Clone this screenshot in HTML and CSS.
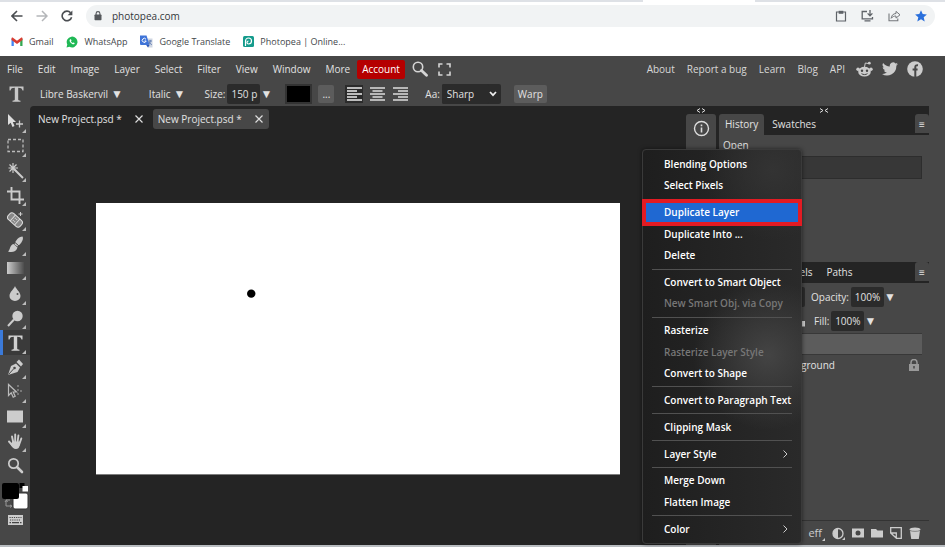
FILE: index.html
```html
<!DOCTYPE html>
<html lang="en">
<head>
<meta charset="utf-8">
<title>Photopea | Online Photo Editor</title>
<link rel="stylesheet" href="styles.css">
</head>
<body>
<header class="browser">
  <div class="tabstrip"><span class="strip-left"></span><span class="strip-active"></span><span class="strip-right"></span></div>
  <div class="navrow">
    <button class="nav" aria-label="Back"><svg width="12" height="12" viewBox="0 0 12 12"><path d="M11.5 6H1M6 1L1 6l5 5" fill="none" stroke="#4b4e52" stroke-width="1.6"/></svg></button>
    <button class="nav" aria-label="Forward"><svg width="12" height="12" viewBox="0 0 12 12"><path d="M.5 6H11M6 1l5 5-5 5" fill="none" stroke="#b4b6b9" stroke-width="1.5"/></svg></button>
    <button class="nav" aria-label="Reload"><svg width="12" height="12" viewBox="0 0 12 12"><path d="M10.6 7.2A4.8 4.8 0 1 1 9.6 2.8" fill="none" stroke="#4b4e52" stroke-width="1.6"/><path d="M11.4.4v4.8H6.6z" fill="#4b4e52"/></svg></button>
    <div class="omnibox">
      <svg width="8" height="10" viewBox="0 0 8 10"><rect x="0.5" y="3.6" width="7" height="5.6" rx=".7" fill="#55585c"/><path d="M2.1 4V2.5a1.9 1.9 0 0 1 3.8 0V4" fill="none" stroke="#55585c" stroke-width="1.1"/></svg>
      <input class="url" aria-label="Address" value="photopea.com">
      <button class="nav" aria-label="Clipboard"><svg width="12" height="12" viewBox="0 0 12 12"><path d="M1.500 2h9v9h-9z" fill="none" stroke="#5f6368" stroke-width="1.2"/><path d="M3.700 .8h4.600v3H3.700z" fill="#5f6368"/></svg></button>
      <button class="nav" aria-label="Install"><svg width="13" height="12" viewBox="0 0 13 12"><path d="M6 1.500H1.200v7.300h10.300V7M3.500 10.800h6" fill="none" stroke="#5f6368" stroke-width="1.3"/><path d="M9 0v5.500M6.600 3.400L9 5.800l2.400-2.400" fill="none" stroke="#5f6368" stroke-width="1.3"/></svg></button>
      <button class="nav" aria-label="Share"><svg width="13" height="12" viewBox="0 0 13 12"><path d="M1 3.500v7.300h8.800V8.500" fill="none" stroke="#74777b" stroke-width="1.1"/><path d="M3.200 8.300c.3-3 2-4.600 4.800-4.800V1.400l4 3.400-4 3.300V6C6 6 4.400 6.700 3.200 8.300z" fill="none" stroke="#74777b" stroke-width="1"/></svg></button>
      <button class="nav" aria-label="Bookmark"><svg width="12" height="12" viewBox="0 0 12 12"><path d="M6 .2l1.700 3.900 4.200.4-3.200 2.800 1 4.200L6 9.300l-3.700 2.200 1-4.200L.1 4.500l4.200-.4z" fill="#2a6fdc"/></svg></button>
    </div>
  </div>
  <nav class="bookmarks">
    <a href="#"><svg width="12" height="10" viewBox="0 0 12 10"><path d="M.5 1.500V9h2.300V4z" fill="#4285f4"/><path d="M11.500 1.500V9H9.200V4z" fill="#34a853"/><path d="M.5 1.500C.5.500 1.500.300 2.300 1L6 3.800 9.700 1c.8-.7 1.800-.5 1.800.500V3L6 7 .5 3z" fill="#d93c31"/></svg>Gmail</a>
    <a href="#"><svg width="12" height="12" viewBox="0 0 12 12"><path d="M.5 11.500l.8-3A5.400 5.400 0 1 1 3.400 10.700z" fill="#1fb855"/><path d="M4.200 3.200C3 4 3.700 5.600 4.700 6.800S7.300 8.800 8.400 8l.2-.9-1.300-.6-.6.6C5.900 6.800 5.200 6.100 4.900 5.300l.6-.6L5 3.200z" fill="#fff"/></svg>WhatsApp</a>
    <a href="#"><svg width="13" height="13" viewBox="0 0 13 13"><path d="M5 3.500h7.500v9H8z" fill="#cfd6e2"/><path d="M0 .5h6.500L9.600 10H1a1 1 0 0 1-1-1z" fill="#3f74d8"/><path d="M8.500 6h3.500M10.200 5v1c0 2-1 3-2 3.800M9 6.500c.5 1.500 1.500 2.500 2.800 3.200" stroke="#6580b5" fill="none"/><path d="M6 4.300A2 2 0 1 0 6.200 6H4.500" stroke="#fff" fill="none"/><path d="M6.200 10h3.400L8 12.500z" fill="#2b56b5"/></svg>Google Translate</a>
    <a href="#"><svg width="11" height="11" viewBox="0 0 11 11"><rect width="11" height="11" rx="1.500" fill="#159b8c"/><path d="M2.500 10V5a3 3 0 1 1 3 3c-2 0-2-3 0-3" fill="none" stroke="#fff" stroke-width="1.200"/></svg>Photopea | Online...</a>
  </nav>
</header>

<main class="app">
  <div class="menubar">
    <nav class="menus">
      <button>File</button><button>Edit</button><button>Image</button><button>Layer</button><button>Select</button><button>Filter</button><button>View</button><button>Window</button><button>More</button>
    </nav>
    <button class="account">Account</button>
    <button class="menuicon" aria-label="Search"><svg width="16" height="16" viewBox="0 0 16 16"><circle cx="6" cy="6" r="4.700" fill="none" stroke="#d5d5d5" stroke-width="1.600"/><path d="M9.500 9.500l5 4.800" stroke="#d5d5d5" stroke-width="2.800" stroke-linecap="round"/></svg></button>
    <button class="menuicon" aria-label="Full screen"><svg width="13" height="13" viewBox="0 0 13 13"><path d="M1 4.500V1h3.500M8.500 1H12v3.500M12 8.500V12H8.500M4.500 12H1V8.500" fill="none" stroke="#d5d5d5" stroke-width="1.600"/></svg></button>
    <nav class="links">
      <a href="#">About</a><a href="#">Report a bug</a><a href="#">Learn</a><a href="#">Blog</a><a href="#">API</a>
    </nav>
    <nav class="social">
      <a href="#" aria-label="Reddit"><svg width="17" height="17" viewBox="0 0 17 17"><g fill="#ccc"><ellipse cx="8.500" cy="10.700" rx="6.300" ry="4.900"/><circle cx="2" cy="8.300" r="1.700"/><circle cx="15" cy="8.300" r="1.700"/><circle cx="13.300" cy="2.200" r="1.400"/></g><path d="M8.500 6l.8-4 3.600.6" fill="none" stroke="#ccc"/><circle cx="6" cy="9.700" r="1.200" fill="#474747"/><circle cx="11" cy="9.700" r="1.200" fill="#474747"/><path d="M5.500 12.600c1.700 1.300 4.300 1.300 6 0" stroke="#474747" fill="none"/></svg></a>
      <a href="#" aria-label="Twitter"><svg width="16" height="14" viewBox="0 0 24 20"><path d="M24 2.400a10 10 0 0 1-2.800.8A5 5 0 0 0 23.300.500a10 10 0 0 1-3.100 1.200A4.900 4.900 0 0 0 11.800 6.200 14 14 0 0 1 1.700 1a4.900 4.900 0 0 0 1.500 6.600A5 5 0 0 1 1 7a4.900 4.900 0 0 0 3.900 4.900 5 5 0 0 1-2.200.1 4.900 4.900 0 0 0 4.600 3.400A10 10 0 0 1 0 17.500 14 14 0 0 0 21.500 5z" fill="#ccc"/></svg></a>
      <a href="#" aria-label="Facebook"><svg width="16" height="16" viewBox="0 0 16 16"><circle cx="8" cy="8" r="7.800" fill="#ccc"/><path d="M8.300 16V6.200C8.300 4.600 9.200 4 11 4.200M5.600 8.500h5" fill="none" stroke="#474747" stroke-width="2"/></svg></a>
    </nav>
  </div>

  <div class="optbar">
    <div class="big-t"><svg width="15" height="16" viewBox="0 0 15 16"><path d="M.5.500h14v4h-1C13 2.500 12 1.800 9.200 1.800v11.400c0 1 .6 1.400 2.300 1.500v1h-8v-1c1.700-.1 2.300-.5 2.300-1.500V1.800C3 1.800 2 2.500 1.500 4.500h-1z" fill="#c8c8c8"/></svg></div>
    <button class="plain font">Libre Baskervil <span class="caret">▼</span></button>
    <button class="plain style">Italic <span class="caret">▼</span></button>
    <label for="size">Size:</label><input id="size" class="dark size" value="150 p"><button class="plain caret" aria-label="Size presets">▼</button>
    <button class="color" aria-label="Text color"></button>
    <button class="grey dots">...</button>
    <div class="aligns">
      <button class="on" aria-label="Align left"><svg width="15" height="14" viewBox="0 0 15 14"><path d="M0 1h15M0 4h10M0 7h15M0 10h10M0 13h15" stroke="#eee" stroke-width="1.500"/></svg></button>
      <button aria-label="Align center"><svg width="15" height="14" viewBox="0 0 15 14"><path d="M0 1h15M2.500 4h10M0 7h15M2.500 10h10M0 13h15" stroke="#ddd" stroke-width="1.500"/></svg></button>
      <button aria-label="Align right"><svg width="15" height="14" viewBox="0 0 15 14"><path d="M0 1h15M5 4h10M0 7h15M5 10h10M0 13h15" stroke="#ddd" stroke-width="1.500"/></svg></button>
    </div>
    <label for="aa">Aa:</label>
    <span class="selwrap"><select id="aa" class="dark"><option>Sharp</option></select><svg width="8" height="6" viewBox="0 0 8 6"><path d="M1 1l3 3.200L7 1" fill="none" stroke="#eee" stroke-width="1.700"/></svg></span>
    <button class="grey warp">Warp</button>
  </div>

  <div class="work">
    <aside class="toolbar">
      <div class="tools">
        <button class="more" aria-label="Move"><svg width="17" height="17" viewBox="0 0 17 17"><path d="M1 1v11l2.700-2.300L5.500 14l2-1-1.700-4H9z" fill="#ddd"/><path d="M12.500 7.500v7M9 11h7" stroke="#ccc" stroke-width="1.300"/></svg></button>
        <button class="more" aria-label="Marquee"><svg width="17" height="17" viewBox="0 0 17 17"><rect x="1" y="2.500" width="15" height="12" fill="none" stroke="#bbb" stroke-width="1.300" stroke-dasharray="3 2"/></svg></button>
        <button class="more" aria-label="Wand"><svg width="17" height="17" viewBox="0 0 17 17"><path d="M7 7l9 9" stroke="#ccc" stroke-width="2"/><path d="M6 1v10M1.500 6h9.500M2.500 2.500l7 7M9.500 2.500l-7 7" stroke="#ccc" stroke-width="1.200"/></svg></button>
        <button class="more" aria-label="Crop"><svg width="17" height="17" viewBox="0 0 17 17"><path d="M4.500 0v12.500H17M0 4.500h12.500V17" fill="none" stroke="#ccc" stroke-width="1.900"/></svg></button>
        <button class="more" aria-label="Healing"><svg width="17" height="17" viewBox="0 0 17 17"><g transform="rotate(42 8 9)"><rect x="0" y="5" width="16" height="8" rx="3" fill="#888" stroke="#ddd"/><path d="M5 5v8M11 5v8" stroke="#ddd"/><path d="M6.500 7.500h3M6.500 10.500h3" stroke="#ddd" stroke-dasharray="1 1"/></g><path d="M13.500 1v4M11.500 3h4" stroke="#ccc"/></svg></button>
        <button class="more" aria-label="Brush"><svg width="17" height="17" viewBox="0 0 17 17"><path d="M7.500 8.500c1-4 4-8 8-8 1.500 2.500-1 7-5 10z" fill="#ccc"/><path d="M6.500 8l4 3.500C9.500 15.500 5 17 1 15.500 3.500 14 2.500 9 6.500 8z" fill="#ccc"/><path d="M8 6.500l4 3.500" stroke="#474747"/></svg></button>
        <button class="more" aria-label="Gradient"><svg width="17" height="13" viewBox="0 0 17 13"><defs><linearGradient id="g"><stop stop-color="#ccc"/><stop offset="1" stop-color="#4c4c4c"/></linearGradient></defs><rect width="17" height="12" fill="url(#g)"/></svg></button>
        <button class="more" aria-label="Blur"><svg width="17" height="17" viewBox="0 0 17 17"><path d="M8 1c1 3 5.500 6 5.500 10a5.500 5 0 0 1-11 0C2.500 7 7 4 8 1z" fill="#ccc"/><circle cx="10.500" cy="9" r="1" fill="#555"/></svg></button>
        <button class="more" aria-label="Dodge"><svg width="17" height="17" viewBox="0 0 17 17"><circle cx="10.500" cy="6" r="5.200" fill="#ccc"/><path d="M7 9.500L1 16" stroke="#ccc" stroke-width="2"/></svg></button>
        <button class="more active" aria-label="Type"><svg width="15" height="16" viewBox="0 0 15 16"><path d="M.5.500h14v4h-1C13 2.500 12 1.800 9.200 1.800v11.400c0 1 .6 1.400 2.300 1.500v1h-8v-1c1.700-.1 2.300-.5 2.300-1.500V1.800C3 1.800 2 2.500 1.500 4.500h-1z" fill="#d0d0d0"/></svg></button>
        <button class="more" aria-label="Pen"><svg width="17" height="17" viewBox="0 0 17 17"><path d="M1 16L4 7l5-2.500 4 4L10.500 13z" fill="#ccc"/><path d="M9.500 3l2.500-2.500L16 5l-2 2.500z" fill="#ccc"/><path d="M1.500 15.500l5-5.500" stroke="#474747"/><circle cx="7.500" cy="9" r="1.300" fill="#474747"/></svg></button>
        <button class="more" aria-label="Path select"><svg width="17" height="17" viewBox="0 0 17 17"><path d="M1.500 1.500v11l2.700-2.700 2 4.500 2-1L6.200 9H9.500z" fill="none" stroke="#bbb" stroke-width="1.200"/><path d="M11 2v12M13 8h3" stroke="#aaa" stroke-dasharray="2 2"/></svg></button>
        <button class="more" aria-label="Rectangle"><svg width="17" height="13" viewBox="0 0 17 13"><rect y=".5" width="16" height="12" fill="#ccc"/></svg></button>
        <button class="more" aria-label="Hand"><svg width="17" height="17" viewBox="0 0 17 17"><path d="M2 8.500l3.500 4M5 3.500l1.500 7M8.200 1.500v9M11.400 2.500l-1 8M14.300 5.500L12 12" stroke="#ccc" stroke-width="1.900" stroke-linecap="round"/><path d="M5.500 8.500h7.500l-.5 4.500c-.4 2-1.600 3-3.500 3-2.500 0-4-2-5.500-4.500z" fill="#ccc"/></svg></button>
        <button aria-label="Zoom"><svg width="17" height="17" viewBox="0 0 17 17"><circle cx="6.500" cy="6.500" r="4.700" fill="none" stroke="#ccc" stroke-width="1.700"/><path d="M10 10l5 5" stroke="#ccc" stroke-width="2.600" stroke-linecap="round"/></svg></button>
      </div>
      <button class="swatches" aria-label="Colors"><svg width="28" height="28" viewBox="0 0 28 28"><rect x="18.500" y="1" width="5" height="5" fill="#000"/><rect x="21.500" y="4" width="5.500" height="5.500" fill="#fff"/><path d="M5 19v5h5M4 20l1.300-2 1.200 2M9 23l2 1-2 1.500M5 18h4" fill="none" stroke="#999"/><rect x="12" y="11" width="15" height="16" rx="2" fill="#fff" stroke="#333"/><rect x="1" y="1" width="17" height="16" rx="2" fill="#000"/></svg></button>
      <button class="keyboard" aria-label="Keyboard"><svg width="15" height="10" viewBox="0 0 15 10"><rect width="15" height="10" fill="#ccc"/><path d="M1.500 2.500h12M2 5h11" stroke="#444" stroke-width="1.200" stroke-dasharray="1.200 1"/><path d="M1.500 7.700h1.500M4 7.700h7M12 7.700h1.500" stroke="#444" stroke-width="1.200"/></svg></button>
    </aside>

    <section class="dock">
      <div class="doc">
        <div class="doctabs">
          <div class="doctab"><span>New Project.psd *</span><button aria-label="Close"><svg width="8" height="8" viewBox="0 0 8 8"><path d="M.5.500l7 7M7.500.500l-7 7" stroke="#ddd" stroke-width="1.200"/></svg></button></div>
          <div class="doctab current"><span>New Project.psd *</span><button aria-label="Close"><svg width="8" height="8" viewBox="0 0 8 8"><path d="M.5.500l7 7M7.500.500l-7 7" stroke="#ddd" stroke-width="1.200"/></svg></button></div>
        </div>
        <div class="stage"><svg class="canvas" viewBox="0 0 524 271"><rect width="524" height="271" fill="#fff"/><circle cx="155" cy="90.500" r="4.200" fill="#000"/></svg></div>
      </div>

      <div class="rail">
        <button class="fold" aria-label="Expand"><svg width="10" height="5" viewBox="0 0 10 5"><path d="M4 .5L1 2.500l3 2M6 .5l3 2-3 2" fill="none" stroke="#ddd"/></svg></button>
        <button class="info" aria-label="Properties"><svg width="17" height="17" viewBox="0 0 17 17"><circle cx="8.500" cy="8.500" r="7" fill="none" stroke="#ddd" stroke-width="1.400"/><path d="M8.500 7.500v5M8.500 4.500v1.700" stroke="#ddd" stroke-width="1.600"/></svg></button>
      </div>

      <div class="panels">
        <button class="fold" aria-label="Collapse"><svg width="10" height="5" viewBox="0 0 10 5"><path d="M1 .5l3 2-3 2M9 .5l-3 2 3 2" fill="none" stroke="#ddd"/></svg></button>
        <div class="ptabs"><button class="current">History</button><button>Swatches</button><button class="pmenu" aria-label="Panel menu">≡</button></div>
        <div class="history"><div class="hrow">Open</div><div class="hrow sel"></div></div>
        <div class="ptabs"><button class="current">Layers</button><button>Channels</button><button>Paths</button><button class="pmenu" aria-label="Panel menu">≡</button></div>
        <div class="layers">
          <div class="lopt"><select class="dark blend" aria-label="Blend mode"><option>Normal</option></select><label for="op">Opacity:</label><input id="op" class="dark pct" value="100%"><button class="plain caret" aria-label="Opacity slider">▼</button></div>
          <div class="lopt"><span class="locks"><svg width="8" height="12" viewBox="0 0 8 12"><path d="M0 6h7v5.500H0zM2 1h2v5H2z" fill="#ccc"/></svg></span><label for="fill">Fill:</label><input id="fill" class="dark pct" value="100%"><button class="plain caret" aria-label="Fill slider">▼</button></div>
          <div class="layer sel"></div>
          <div class="layer"><span>Background</span><svg width="10" height="12" viewBox="0 0 10 12"><path d="M0 5h10v7H0z" fill="#999"/><path d="M2 5.500V3.500a3 3 0 0 1 6 0v2" fill="none" stroke="#999" stroke-width="1.500"/><path d="M5 7v2.500" stroke="#474747" stroke-width="1.500"/></svg></div>
        </div>
        <div class="pfoot">
          <button aria-label="Link layers"><svg width="13" height="13" viewBox="0 0 13 13"><path d="M9 3c3 0 3 7 0 7M4 3c-3 0-3 7 0 7M4 6.500h5" fill="none" stroke="#aaa" stroke-width="1.300"/></svg></button>
          <button class="eff">eff<svg width="3" height="3" viewBox="0 0 3 3"><path d="M3 0v3H0z" fill="#ccc"/></svg></button>
          <button aria-label="Adjustment"><svg width="13" height="13" viewBox="0 0 13 13"><circle cx="6" cy="6.500" r="5" fill="none" stroke="#ccc" stroke-width="1.300"/><path d="M6 1.500a5 5 0 0 0 0 10zM13 10v3h-3z" fill="#ccc"/></svg></button>
          <button aria-label="Mask"><svg width="12" height="12" viewBox="0 0 12 12"><rect y="1.500" width="12" height="9" fill="#ccc"/><circle cx="6" cy="6" r="2.500" fill="#474747"/></svg></button>
          <button aria-label="Group"><svg width="12" height="12" viewBox="0 0 12 12"><path d="M0 2h5l1.500 1.500H12v7H0z" fill="#ccc"/></svg></button>
          <button aria-label="New layer"><svg width="12" height="12" viewBox="0 0 12 12"><path d="M.700 6V.700h10.600v10.600H6.500L.700 6h5.600v5" fill="none" stroke="#ccc" stroke-width="1.300"/></svg></button>
          <button aria-label="Delete"><svg width="12" height="12" viewBox="0 0 12 12"><path d="M1 3.500h10L9.800 12H2.200z" fill="#ccc"/><ellipse cx="6" cy="2.500" rx="5.500" ry="2" fill="#ccc"/><path d="M1 3.600c2.500 1 7.500 1 10 0" fill="none" stroke="#666" stroke-width=".7"/></svg></button>
        </div>
      </div>
    </section>
  </div>
</main>

<div class="context" role="menu">
  <button role="menuitem">Blending Options</button>
  <button role="menuitem">Select Pixels</button>
  <hr>
  <button role="menuitem" class="hot">Duplicate Layer</button>
  <button role="menuitem">Duplicate Into ...</button>
  <button role="menuitem">Delete</button>
  <hr>
  <button role="menuitem">Convert to Smart Object</button>
  <button role="menuitem" disabled>New Smart Obj. via Copy</button>
  <hr>
  <button role="menuitem">Rasterize</button>
  <button role="menuitem" disabled>Rasterize Layer Style</button>
  <button role="menuitem">Convert to Shape</button>
  <hr>
  <button role="menuitem">Convert to Paragraph Text</button>
  <hr>
  <button role="menuitem">Clipping Mask</button>
  <hr>
  <button role="menuitem">Layer Style<svg width="5" height="8" viewBox="0 0 5 8"><path d="M.5.500L4 4 .5 7.500" fill="none" stroke="#ccc"/></svg></button>
  <hr>
  <button role="menuitem">Merge Down</button>
  <button role="menuitem">Flatten Image</button>
  <hr>
  <button role="menuitem">Color<svg width="5" height="8" viewBox="0 0 5 8"><path d="M.5.500L4 4 .5 7.500" fill="none" stroke="#ccc"/></svg></button>
</div>
</body>
</html>
```
FILE: styles.css
```css
* { box-sizing: border-box; }
body {
  margin: 0;
  height: 100vh;
  display: flex;
  flex-direction: column;
  overflow: hidden;
  background: #fff;
  font: 10px/16px "Open Sans", sans-serif;
  color: #e2e2e2;
}
button, input, select { font: inherit; color: inherit; border: 0; margin: 0; padding: 0; background: none; }
button { display: flex; align-items: center; justify-content: center; white-space: nowrap; }
a { color: inherit; text-decoration: none; }
svg { display: block; flex: none; }
label { white-space: nowrap; }

/* Browser chrome */
.browser { flex: none; font-size: 9px; color: #44474b; }
.tabstrip { display: flex; height: 2px; }
.strip-left { flex: 643; background: #dee1e6; }
.strip-active { flex: 112; }
.strip-right { flex: 190; background: #dee1e6; }
.navrow { display: flex; align-items: center; height: 28px; padding: 0 10px 0 11px; gap: 13px; }
.omnibox { flex: 1; display: flex; align-items: center; height: 22px; padding: 0 8px; gap: 14px; border-radius: 11px; background: #f1f3f4; }
.url { flex: 1; min-width: 0; margin-left: -4px; font-size: 10px; color: #33363a; }
.bookmarks { display: flex; align-items: center; height: 26px; padding: 0 11px 3px; gap: 13px; }
.bookmarks a { display: flex; align-items: center; gap: 6px; }

/* Menu bar */
.app { flex: 1; min-height: 0; display: flex; flex-direction: column; background: #474747; border-bottom: 2px solid #b9bdc1; }
.menubar { display: flex; align-items: center; flex: none; height: 26px; padding: 0 22px 0 7px; }
.menus { display: flex; gap: 15px; }
.account { height: 19px; margin: 0 7px; padding: 0 5px; border-radius: 2px; background: #b50000; color: #fff; }
.menuicon { margin-right: 10px; }
.links, .social { display: flex; align-items: center; color: #d8d8d8; }
.links { gap: 12px; margin-left: auto; }
.social { gap: 9px; margin-left: 11px; }

/* Tool options */
.optbar { display: flex; align-items: center; flex: none; height: 24px; padding-left: 9px; }
.big-t { width: 31px; }
.caret { font-size: 12px; }
.font, .style { gap: 3px; }
.font { margin-right: 26px; }
.style { margin-right: 19px; }
.dark { height: 20px; background: #2b2b2b; border-radius: 2px; color: #e2e2e2; }
.size { width: 33px; margin-left: 2px; padding-left: 4px; }
.color { width: 27px; height: 20px; margin: 0 6px 0 13px; border: 2px solid #333; background: #000; }
.grey { height: 18px; background: #5c5c5c; border-radius: 2px; }
.dots { width: 16px; margin-right: 11px; }
.aligns { display: flex; gap: 5px; margin-right: 16px; }
.aligns button { width: 18px; height: 18px; }
.aligns .on { background: #2b2b2b; }
.selwrap { display: flex; align-items: center; margin-left: 2px; border-radius: 2px; background: #2b2b2b; padding-right: 4px; }
.selwrap select { width: 47px; padding-left: 5px; appearance: none; }
.warp { margin-left: 13px; padding: 0 4px; }

/* Left toolbar */
.work { flex: 1; min-height: 0; display: flex; }
.toolbar { width: 30px; flex: none; display: flex; flex-direction: column; padding-top: 3px; }
.tools { flex: 1; display: grid; grid-auto-rows: 1fr; }
.tools button { position: relative; min-height: 0; }
.tools .more::after { content: ""; position: absolute; right: 4px; bottom: 1px; border: 2px solid transparent; border-right-color: #bbb; border-bottom-color: #bbb; }
.tools .active { background: #3a3a3a; border-left: 3px solid #3b7ad9; padding-right: 3px; }
.swatches { height: 28px; margin-top: 4px; }
.keyboard { height: 35px; padding-bottom: 15px; }

/* Document area */
.dock { flex: 1; min-width: 0; display: flex; margin-right: 16px; background: #242424; border-top-left-radius: 4px; }
.doc { flex: 1; min-width: 0; display: flex; flex-direction: column; }
.doctabs { display: flex; gap: 4px; padding: 3px 1px 0; }
.doctab { display: flex; align-items: center; height: 20px; padding: 0 6px 0 7px; gap: 13px; border-radius: 3px; }
.doctab.current { padding-left: 5px; background: #474747; }
.stage { flex: 1; min-height: 0; display: flex; align-items: center; justify-content: center; padding-top: 4px; }
.canvas { width: 80%; }

/* Panels */
.rail { width: 30px; display: flex; flex-direction: column; }
.fold { height: 8px; flex: none; width: 100%; }
.info { flex: 1; align-items: flex-start; padding-top: 6px; background: #474747; border-radius: 3px 3px 0 0; }
.panels { width: 210px; margin-left: 3px; display: flex; flex-direction: column; background: #474747; }
.panels .fold { background: #242424; }
.ptabs { display: flex; flex: none; height: 21px; background: #242424; gap: 2px; }
.ptabs button { padding: 0 6px 1px; border-radius: 3px 3px 0 0; }
.ptabs .current { background: #474747; }
.ptabs .pmenu { width: 14px; height: 19px; padding: 0; margin-left: auto; background: #474747; }
.history { flex: none; height: 127px; padding: 0 7px 0 2px; }
.hrow { height: 21px; padding: 2px; }
.hrow.sel { height: 23px; background: #373737; border: 1px solid #2d2d2d; }
.layers { flex: 1; padding-top: 2px; }
.lopt { display: flex; align-items: center; height: 24px; }
.blend { width: 84px; margin: 0 6px 0 2px; padding-left: 4px; appearance: none; }
.pct { width: 33px; margin-left: 2px; text-align: center; }
.locks { width: 87px; margin-right: 8px; display: flex; justify-content: flex-end; }
.layer { display: flex; align-items: center; justify-content: space-between; height: 21px; margin-right: 7px; padding: 0 3px 0 60px; border-top: 1px solid #383838; }
.layer.sel { background: #5c5c5c; }
.pfoot { display: flex; flex: none; align-items: center; justify-content: flex-end; gap: 7px; height: 25px; padding-right: 8px; border-top: 1px solid #333; }
.eff { align-items: flex-end; font-size: 11px; color: #ccc; }

/* Layer context menu */
.context {
  position: absolute;
  top: 149px;
  right: 143px;
  bottom: 3px;
  width: 160px;
  display: flex;
  flex-direction: column;
  justify-content: space-between;
  padding: 4px 0 3px;
  border: 1px solid #3a3a3a;
  border-radius: 4px;
  color: #fff;
  font-weight: 600;
  background:
    radial-gradient(circle at 125px 205px, #444 0, transparent 75px),
    radial-gradient(circle at 130px 20px, #333 0, transparent 70px),
    linear-gradient(90deg, #1e1e1e, #2a2a2a);
  box-shadow: 0 0 4px #0008;
}
.context button { height: 21px; margin: 0 2px; justify-content: space-between; padding: 0 11px 1px 19px; }
.context button:disabled { color: #777; }
.context hr { width: 140px; height: 1px; margin: 2px auto; border: 0; background: #515151; }
.context .hot { background: #1f68d2; outline: 4px solid #e31b23; outline-offset: -1px; }
```
